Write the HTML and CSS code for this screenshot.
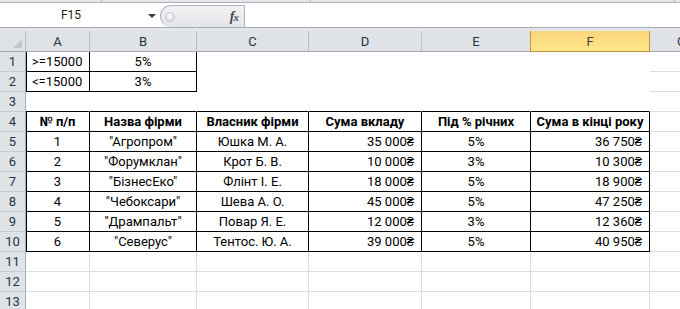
FILE: index.html
```html
<!DOCTYPE html>
<html lang="uk">

<head>
    <meta charset="UTF-8">
    <meta name="viewport" content="width=device-width, initial-scale=1.0">
    <title>Вклади</title>
    <link rel="stylesheet" href="styles.css">
</head>

<body>
    <!-- край стрічки -->
    <div class="ribbon-edge">
        <span class="tick t1"></span>
        <span class="tick t2"></span>
        <span class="tick t3"></span>
    </div>

    <!-- рядок формул -->
    <div class="formula-bar">
        <div class="name-box">
            <span class="name">F15</span>
            <span class="arrow"></span>
        </div>
        <div class="fx-box">
            <span class="knob"></span>
            <span class="fx">f<span class="fx-x">x</span></span>
        </div>
        <div class="formula-input"></div>
    </div>
    <div class="gap"></div>

    <!-- аркуш -->
    <div class="sheet">
        <!-- заголовки стовпців -->
        <div class="c h corner"><span class="tri"></span></div>
        <div class="c h">A</div>
        <div class="c h">B</div>
        <div class="c h">C</div>
        <div class="c h">D</div>
        <div class="c h">E</div>
        <div class="c h sel">F</div>
        <div class="c h">G</div>

        <!-- 1 -->
        <div class="c r">1</div>
        <div class="c box edge lt">&gt;=15000</div>
        <div class="c box ctr">5%</div>
        <div class="c blank"></div>
        <div class="c blank"></div>
        <div class="c blank"></div>
        <div class="c blank"></div>
        <div class="c"></div>

        <!-- 2 -->
        <div class="c r">2</div>
        <div class="c box edge lt">&lt;=15000</div>
        <div class="c box ctr">3%</div>
        <div class="c blank"></div>
        <div class="c blank"></div>
        <div class="c blank"></div>
        <div class="c blank"></div>
        <div class="c"></div>

        <!-- 3 -->
        <div class="c r">3</div>
        <div class="c top"></div>
        <div class="c top"></div>
        <div class="c top"></div>
        <div class="c top"></div>
        <div class="c top"></div>
        <div class="c top"></div>
        <div class="c"></div>

        <!-- 4 шапка таблиці -->
        <div class="c r">4</div>
        <div class="c box edge ctr b">№ п/п</div>
        <div class="c box ctr b">Назва фірми</div>
        <div class="c box ctr b">Власник фірми</div>
        <div class="c box ctr b">Сума вкладу</div>
        <div class="c box ctr b">Під % річних</div>
        <div class="c box ctr b">Сума в кінці року</div>
        <div class="c"></div>

        <!-- 5 -->
        <div class="c r">5</div>
        <div class="c box edge ctr">1</div>
        <div class="c box ctr">"Агропром"</div>
        <div class="c box ctr">Юшка М. А.</div>
        <div class="c box rt">35&nbsp;000₴</div>
        <div class="c box ctr">5%</div>
        <div class="c box rt">36&nbsp;750₴</div>
        <div class="c"></div>

        <!-- 6 -->
        <div class="c r">6</div>
        <div class="c box edge ctr">2</div>
        <div class="c box ctr">"Форумклан"</div>
        <div class="c box ctr">Крот Б. В.</div>
        <div class="c box rt">10&nbsp;000₴</div>
        <div class="c box ctr">3%</div>
        <div class="c box rt">10&nbsp;300₴</div>
        <div class="c"></div>

        <!-- 7 -->
        <div class="c r">7</div>
        <div class="c box edge ctr">3</div>
        <div class="c box ctr">"БізнесЕко"</div>
        <div class="c box ctr">Флінт І. Е.</div>
        <div class="c box rt">18&nbsp;000₴</div>
        <div class="c box ctr">5%</div>
        <div class="c box rt">18&nbsp;900₴</div>
        <div class="c"></div>

        <!-- 8 -->
        <div class="c r">8</div>
        <div class="c box edge ctr">4</div>
        <div class="c box ctr">"Чебоксари"</div>
        <div class="c box ctr">Шева А. О.</div>
        <div class="c box rt">45&nbsp;000₴</div>
        <div class="c box ctr">5%</div>
        <div class="c box rt">47&nbsp;250₴</div>
        <div class="c"></div>

        <!-- 9 -->
        <div class="c r">9</div>
        <div class="c box edge ctr">5</div>
        <div class="c box ctr">"Дрампальт"</div>
        <div class="c box ctr">Повар Я. Е.</div>
        <div class="c box rt">12&nbsp;000₴</div>
        <div class="c box ctr">3%</div>
        <div class="c box rt">12&nbsp;360₴</div>
        <div class="c"></div>

        <!-- 10 -->
        <div class="c r">10</div>
        <div class="c box edge ctr">6</div>
        <div class="c box ctr">"Северус"</div>
        <div class="c box ctr">Тентос. Ю. А.</div>
        <div class="c box rt">39&nbsp;000₴</div>
        <div class="c box ctr">5%</div>
        <div class="c box rt">40&nbsp;950₴</div>
        <div class="c"></div>

        <!-- порожні рядки -->
        <div class="c r">11</div>
        <div class="c"></div>
        <div class="c"></div>
        <div class="c"></div>
        <div class="c"></div>
        <div class="c"></div>
        <div class="c"></div>
        <div class="c"></div>

        <div class="c r">12</div>
        <div class="c"></div>
        <div class="c"></div>
        <div class="c"></div>
        <div class="c"></div>
        <div class="c"></div>
        <div class="c"></div>
        <div class="c"></div>

        <div class="c r">13</div>
        <div class="c"></div>
        <div class="c"></div>
        <div class="c"></div>
        <div class="c"></div>
        <div class="c"></div>
        <div class="c"></div>
        <div class="c"></div>
    </div>
</body>

</html>
```

FILE: styles.css
```css
* {
    margin: 0;
    padding: 0;
    box-sizing: border-box;
}

body {
    width: 680px;
    height: 309px;
    overflow: hidden;
    background: #fff;
    font-family: Roboto, "Liberation Sans", sans-serif;
    color: #000;
}

/* край стрічки */
.ribbon-edge {
    height: 3px;
    display: flex;
    background: #e3e6ea;
    border-bottom: 1px solid #aeb2b8;
}

.tick {
    display: block;
    height: 2px;
    border-right: 1px solid #b3b7bc;
}

.t1 {
    width: 102px;
}

.t2 {
    width: 209px;
}

.t3 {
    width: 364px;
}

/* рядок формул */
.formula-bar {
    height: 25px;
    display: flex;
    background: #fff;
    border-bottom: 1px solid #a7abb0;
}

.name-box {
    width: 160px;
    display: flex;
    align-items: center;
}

.name {
    width: 142px;
    text-align: center;
    font-size: 12px;
    color: #1e1e1e;
}

.arrow {
    width: 0;
    height: 0;
    margin-left: 6px;
    margin-top: 1px;
    border-left: 4px solid transparent;
    border-right: 4px solid transparent;
    border-top: 4px solid #3a3a3a;
}

.fx-box {
    width: 85px;
    margin-top: 2px;
    display: flex;
    align-items: center;
    justify-content: space-between;
    padding: 0 6px 0 4px;
    background: linear-gradient(#f1f2f4, #e2e5e9);
    border: 1px solid #b1b5ba;
    border-bottom: none;
    border-radius: 11px 0 0 11px;
}

.knob {
    width: 10px;
    height: 10px;
    border-radius: 50%;
    background: radial-gradient(circle at 40% 35%, #ffffff, #c9ccd1);
    border: 1px solid #c3c6cb;
}

.fx {
    font-family: "Liberation Serif", serif;
    font-style: italic;
    font-weight: 700;
    font-size: 14px;
    color: #4a4a4a;
    letter-spacing: -1px;
}

.fx-x {
    font-size: 11px;
}

.formula-input {
    flex: 1;
}

.gap {
    height: 3px;
    background: #e3e6ea;
}

/* аркуш */
.sheet {
    display: grid;
    grid-template-columns: 26px 64px 107px 112px 113px 109px 119px 64px;
    grid-template-rows: 21px;
    grid-auto-rows: 20px;
    font-size: 13px;
}

.c {
    border-right: 1px solid #dadcdd;
    border-bottom: 1px solid #dadcdd;
    line-height: 18px;
    padding-top: 1px;
    white-space: nowrap;
    overflow: hidden;
}

/* заголовки */
.h {
    padding-top: 2px;
    text-align: center;
    color: #27333f;
    background: #dfe3e8;
    border-right-color: #bcc0c6;
    border-bottom-color: #a3a7ad;
}

.corner {
    display: flex;
    justify-content: flex-end;
    align-items: flex-end;
    padding: 0 3px 3px 0;
}

.tri {
    width: 0;
    height: 0;
    border-left: 9px solid transparent;
    border-bottom: 9px solid #c2c6cb;
}

.sel {
    color: #3a3a3a;
    background: linear-gradient(#f9d57c, #ffe68a);
    border-right-color: #c2913a;
    border-bottom-color: #c2913a;
    box-shadow: -1px 0 0 #c2913a;
}

.r {
    text-align: center;
    color: #27333f;
    background: #dfe3e8;
    border-right-color: #a9adb3;
    border-bottom-color: #c7cbd0;
}

/* межі клітинок */
.blank {
    border-color: #fff;
}

.top {
    border-right-color: #fff;
    border-bottom-color: #000;
}

.box {
    border-right-color: #000;
    border-bottom-color: #000;
}

.edge {
    box-shadow: inset 1px 0 0 #000;
}

/* вирівнювання */
.lt {
    padding-left: 6px;
}

.ctr {
    text-align: center;
}

.rt {
    text-align: right;
    padding-right: 7px;
}

.b {
    font-weight: 700;
}
```
